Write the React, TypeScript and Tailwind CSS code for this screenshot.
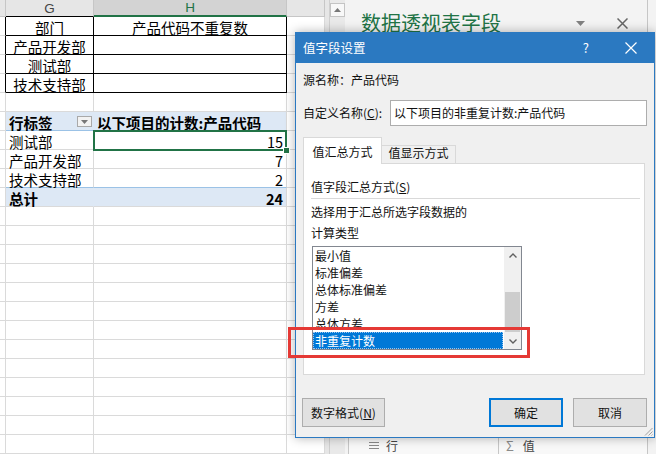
import React from "react";

function C({ className = "", children }: { className?: string; children?: React.ReactNode }) {
  return (
    <div
      className={
        "shrink-0 h-full whitespace-nowrap text-[14.5px] pt-[3px] leading-[15px] " + className
      }
    >
      {children}
    </div>
  );
}

function PlainRow() {
  return (
    <div className="flex h-[19px] shrink-0">
      <C className="w-[6px] border-r border-b border-[#dadada]" />
      <C className="w-[88px] border-r border-b border-[#dadada]" />
      <C className="w-[193px] border-r border-b border-[#dadada]" />
      <C className="w-[38px] border-r border-b border-[#dadada]" />
    </div>
  );
}

function TableRow({ g, h }: { g: string; h?: string }) {
  return (
    <div className="flex h-[19px] shrink-0">
      <C className="w-[6px] border-r border-b border-r-black border-b-[#dadada]" />
      <C className="w-[88px] border-r border-b border-black text-center">{g}</C>
      <C className="w-[193px] border-r border-b border-black text-center">{h}</C>
      <C className="w-[38px] border-r border-b border-[#dadada]" />
    </div>
  );
}

function Sheet() {
  return (
    <div className="w-[325px] shrink-0 flex flex-col bg-white">
      <div className="flex h-[17px] shrink-0 text-[13.5px] leading-[15px] font-['Liberation_Sans',sans-serif]">
        <div className="w-[6px] shrink-0 bg-[#e6e6e6] border-r border-b border-[#c6c6c6]" />
        <div className="w-[88px] shrink-0 bg-[#e6e6e6] border-r border-[#c6c6c6] border-b border-b-black flex items-center justify-center text-[#444]">
          G
        </div>
        <div className="w-[193px] shrink-0 bg-[#d3d3d3] border-r border-[#c6c6c6] border-b-2 border-b-[#217346] flex items-center justify-center text-[#217346]">
          H
        </div>
        <div className="w-[38px] shrink-0 bg-[#e6e6e6] border-r border-b border-[#c6c6c6]" />
      </div>

      <TableRow g="部门" h="产品代码不重复数" />
      <TableRow g="产品开发部" />
      <TableRow g="测试部" />
      <TableRow g="技术支持部" />
      <PlainRow />

      <div className="flex h-[19px] shrink-0">
        <C className="w-[6px] border-r border-b border-[#dadada]" />
        <C className="w-[88px] flex items-start pl-[3px] pr-[1px] bg-[#dde8f5] border-r border-b border-r-[#dde8f5] border-b-[#9bc2e6] font-bold">
          <span>行标签</span>
          <span className="ml-auto mt-[1px] w-[15px] h-[11px] border border-[#a9a9a9] bg-[#f2f2f2] flex items-center justify-center">
            <svg width="7" height="4" viewBox="0 0 7 4">
              <path d="M0 0 L7 0 L3.5 4 Z" fill="#777" />
            </svg>
          </span>
        </C>
        <C className="w-[193px] pl-[3px] bg-[#dde8f5] border-r border-b border-r-[#dadada] border-b-[#9bc2e6] font-bold">
          以下项目的计数:产品代码
        </C>
        <C className="w-[38px] border-r border-b border-[#dadada]" />
      </div>

      <div className="flex h-[19px] shrink-0">
        <C className="w-[6px] border-r border-b border-[#dadada]" />
        <C className="w-[88px] pl-[3px] border-r border-b border-[#dadada]">测试部</C>
        <div className="shrink-0 h-full w-[193px] relative text-right pr-[3px] text-[14.5px] pt-[3px] leading-[15px] border-r border-b border-[#dadada]">
          15
          <div className="absolute left-[-1px] top-[-1px] w-[194px] h-[21px] border-2 border-[#217346]" />
          <div className="absolute right-[-4px] bottom-[-5px] w-[7px] h-[7px] bg-[#217346] border border-white" />
        </div>
        <C className="w-[38px] border-r border-b border-[#dadada]" />
      </div>

      <div className="flex h-[19px] shrink-0">
        <C className="w-[6px] border-r border-b border-[#dadada]" />
        <C className="w-[88px] pl-[3px] border-r border-b border-[#dadada]">产品开发部</C>
        <C className="w-[193px] text-right pr-[3px] border-r border-b border-[#dadada]">7</C>
        <C className="w-[38px] border-r border-b border-[#dadada]" />
      </div>

      <div className="flex h-[19px] shrink-0">
        <C className="w-[6px] border-r border-b border-[#dadada]" />
        <C className="w-[88px] pl-[3px] border-r border-b border-r-[#dadada] border-b-[#9bc2e6]">技术支持部</C>
        <C className="w-[193px] text-right pr-[3px] border-r border-b border-r-[#dadada] border-b-[#9bc2e6]">2</C>
        <C className="w-[38px] border-r border-b border-[#dadada]" />
      </div>

      <div className="flex h-[19px] shrink-0">
        <C className="w-[6px] border-r border-b border-[#dadada]" />
        <C className="w-[88px] pl-[3px] bg-[#dde8f5] border-r border-b border-r-[#dde8f5] border-b-[#dadada] font-bold">
          总计
        </C>
        <C className="w-[193px] text-right pr-[3px] bg-[#dde8f5] border-r border-b border-[#dadada] font-bold">24</C>
        <C className="w-[38px] border-r border-b border-[#dadada]" />
      </div>

      <PlainRow />
      <PlainRow />
      <PlainRow />
      <PlainRow />
      <PlainRow />
      <PlainRow />
      <PlainRow />
      <PlainRow />
      <PlainRow />
      <PlainRow />
      <PlainRow />
      <PlainRow />
      <PlainRow />
      <PlainRow />
    </div>
  );
}

function Pane() {
  return (
    <div className="w-[302px] shrink-0 bg-[#f3f3f3] flex flex-col">
      <div className="mt-[10px] h-[26px] flex items-center pl-[16px] pr-[19px]">
        <span className="text-[20px] leading-[26px] text-[#217346] whitespace-nowrap">数据透视表字段</span>
        <svg className="ml-auto" width="9" height="5" viewBox="0 0 9 5">
          <path d="M0 0 L9 0 L4.5 5 Z" fill="#808080" />
        </svg>
        <svg className="ml-[32px]" width="11" height="11" viewBox="0 0 11 11">
          <path d="M0.5 0.5 L10.5 10.5 M10.5 0.5 L0.5 10.5" stroke="#666" strokeWidth="1.5" />
        </svg>
      </div>
      <div className="mt-auto h-[24px] flex ml-[3px] text-[12px] text-[#444]">
        <div className="w-[150px] bg-[#f8f8f8] border-l border-t border-[#c6c6c6] flex items-center pl-[20px] pt-[6px]">
          <svg width="10" height="7" viewBox="0 0 10 7">
            <path d="M0 0.5 H10 M0 3.5 H10 M0 6.5 H10" stroke="#8a8a8a" strokeWidth="1" />
          </svg>
          <span className="ml-[7px]">行</span>
        </div>
        <div className="flex-1 bg-[#f8f8f8] border-l border-t border-[#c6c6c6] flex items-center pl-[7px] pt-[6px]">
          <span className="text-[#8a8a8a] text-[13px]">Σ</span>
          <span className="ml-[9px]">值</span>
        </div>
      </div>
    </div>
  );
}

function Dialog() {
  const items = ["最小值", "标准偏差", "总体标准偏差", "方差", "总体方差"];
  return (
    <div className="absolute left-[295px] top-[32px] w-[360px] h-[406px] border border-[#2b79c1] bg-[#f0f0f0] shadow-[0_0_10px_rgba(0,0,0,0.3)] flex flex-col text-[12px] text-[#111]">
      <div className="h-[30px] shrink-0 bg-[#2b79c1] flex items-center text-white">
        <span className="pl-[7px] text-[12.5px] leading-[16px]">值字段设置</span>
        <span className="ml-auto text-[13px] leading-[16px]">?</span>
        <svg className="ml-[36px] mr-[17px]" width="12" height="12" viewBox="0 0 12 12">
          <path d="M0.5 0.5 L11.5 11.5 M11.5 0.5 L0.5 11.5" stroke="white" strokeWidth="1.2" />
        </svg>
      </div>

      <div className="flex-1 flex flex-col px-[7px] relative">
        <div className="mt-[9px] h-[16px] leading-[16px]">源名称：产品代码</div>

        <div className="mt-[12px] flex items-center h-[26px]">
          <span className="w-[87px] shrink-0 leading-[16px]">
            自定义名称(<span className="underline">C</span>):
          </span>
          <div className="flex-1 h-[26px] border border-[#adadad] bg-white pl-[3px] leading-[24px]">
            以下项目的非重复计数:产品代码
          </div>
        </div>

        <div className="mt-[11px] flex items-end h-[27px]">
          <div className="relative z-10 w-[79px] h-[27px] bg-white border border-b-0 border-[#d9d9d9] text-center pt-[6px] leading-[16px]">
            值汇总方式
          </div>
          <div className="w-[74px] h-[19px] bg-[#f0f0f0] border border-l-0 border-[#d9d9d9] text-center leading-[14px]">
            值显示方式
          </div>
        </div>

        <div className="-mt-px mr-[2px] h-[212px] bg-white border border-[#d9d9d9] flex flex-col pl-[7px] pr-[4px]">
          <div className="mt-[15px] leading-[16px]">
            值字段汇总方式(<span className="underline">S</span>)
          </div>
          <div className="mt-[3px] h-px bg-[#d9d9d9]" />
          <div className="mt-[5px] leading-[16px]">选择用于汇总所选字段数据的</div>
          <div className="mt-[5px] leading-[16px]">计算类型</div>

          <div className="mt-[5px] ml-[1px] w-[210px] h-[104px] border border-[#828790] flex">
            <div className="flex-1 flex flex-col">
              {items.map((t) => (
                <div key={t} className="h-[17px] leading-[17px] pl-[2px] whitespace-nowrap">
                  {t}
                </div>
              ))}
              <div className="h-[17px] w-[190px] leading-[15px] pl-[1px] bg-[#0078d7] text-white border border-dotted border-[#9cc5ee] whitespace-nowrap">
                非重复计数
              </div>
            </div>
            <div className="w-[17px] shrink-0 bg-[#f0f0f0] flex flex-col">
              <div className="h-[17px] flex items-center justify-center">
                <svg width="8" height="5" viewBox="0 0 8 5">
                  <path d="M0.5 4.5 L4 1 L7.5 4.5" stroke="#606060" strokeWidth="1.4" fill="none" />
                </svg>
              </div>
              <div className="flex-1 flex flex-col justify-end">
                <div className="h-[40px] mx-[1px] mb-[1px] bg-[#cdcdcd]" />
              </div>
              <div className="h-[16px] flex items-center justify-center">
                <svg width="8" height="5" viewBox="0 0 8 5">
                  <path d="M0.5 0.5 L4 4 L7.5 0.5" stroke="#606060" strokeWidth="1.4" fill="none" />
                </svg>
              </div>
            </div>
          </div>
        </div>

        <div className="mt-[23px] flex -ml-px">
          <div className="w-[83px] h-[29px] bg-[#e1e1e1] border border-[#adadad] flex items-center justify-center leading-[16px]">
            数字格式(<span className="underline">N</span>)
          </div>
          <div className="ml-auto w-[74px] h-[29px] bg-[#e1e1e1] border-2 border-[#0078d7] flex items-center justify-center leading-[16px]">
            确定
          </div>
          <div className="ml-[10px] w-[74px] h-[29px] bg-[#e1e1e1] border border-[#adadad] flex items-center justify-center leading-[16px]">
            取消
          </div>
        </div>

        <svg className="absolute right-[1px] bottom-[1px]" width="10" height="10" viewBox="0 0 10 10">
          <path d="M9.5 2 L2 9.5 M9.5 5.5 L5.5 9.5 M9.5 8.5 L8.5 9.5" stroke="#a0a0a0" strokeWidth="1" />
        </svg>
      </div>
    </div>
  );
}

export default function App() {
  return (
    <div className="relative w-[656px] h-[454px] overflow-hidden bg-white flex font-['Noto_Sans_CJK_SC',sans-serif] text-black">
      <Sheet />
      <div className="w-[4px] shrink-0 bg-[#e6e6e6]" />
      <div className="w-[16px] shrink-0 bg-[#e9e9e9] border-l border-[#cfcfcf] flex flex-col">
        <div className="mt-[3px] h-[14px] bg-[#f8f8f8] border border-[#c4c4c4] flex items-center justify-center">
          <svg width="7" height="4" viewBox="0 0 7 4">
            <path d="M0 4 L7 4 L3.5 0 Z" fill="#777" />
          </svg>
        </div>
      </div>
      <Pane />
      <div className="w-[9px] shrink-0 bg-[#f3f3f3] border-l border-[#c6c6c6]" />

      <Dialog />

      <div className="absolute left-[288px] top-[327px] w-[242px] h-[31px] border-[3px] border-[#e53935]" />
    </div>
  );
}
